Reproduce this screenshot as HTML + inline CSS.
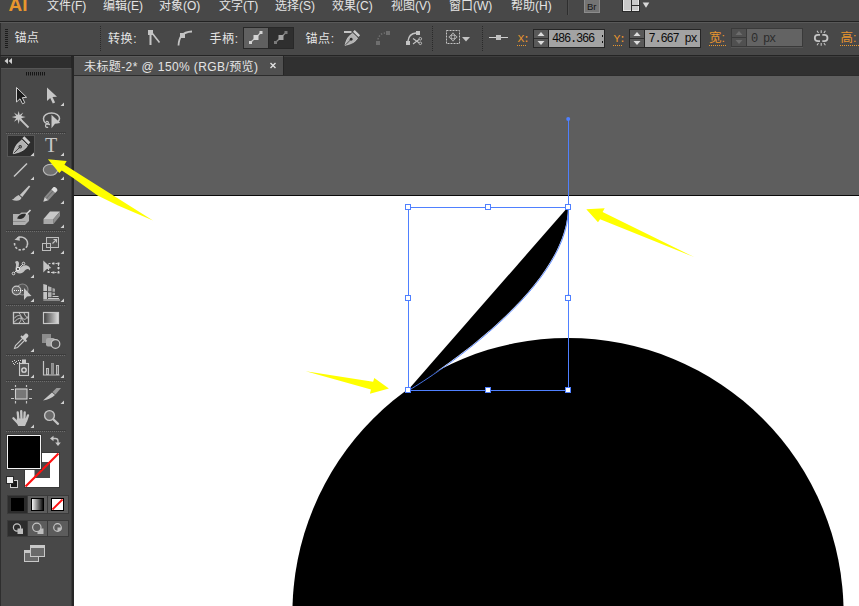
<!DOCTYPE html>
<html lang="zh"><head><meta charset="utf-8"><title>Adobe Illustrator</title>
<style>
html,body{margin:0;padding:0;background:#5e5e5e;overflow:hidden}
body{width:859px;height:606px;position:relative}
svg{position:absolute;left:0;top:0;display:block}
text{font-family:"Liberation Sans","Noto Sans CJK SC",sans-serif;font-size:12px;fill:#e4e4e4}
.mono{font-family:"Liberation Mono","Noto Sans CJK SC",monospace;font-size:12px;letter-spacing:-1.200px;fill:#0c0c0c}
.or{fill:#e8962e}
.ic{fill:#c4c4c4}
.st{fill:none;stroke:#c4c4c4}
</style></head><body>
<svg width="859" height="606" viewBox="0 0 859 606">
<defs>
<linearGradient id="gLR" x1="0" x2="1" y1="0" y2="0"><stop offset="0" stop-color="#3c3c3c"/><stop offset="1" stop-color="#e0e0e0"/></linearGradient>
<linearGradient id="gWB" x1="0" x2="1" y1="0" y2="0"><stop offset="0" stop-color="#fff"/><stop offset="1" stop-color="#000"/></linearGradient>
<clipPath id="cv"><rect x="74" y="76" width="785" height="530"/></clipPath>
</defs>
<!-- canvas -->
<rect x="0" y="0" width="859" height="606" fill="#5e5e5e"/>
<rect x="74" y="195" width="785" height="411" fill="#ffffff"/>
<rect x="74" y="195" width="785" height="1" fill="#0a0a0a"/>
<!-- ARTWORK -->
<g id="art" clip-path="url(#cv)">
<circle cx="568" cy="613.600" r="275.600" fill="#000"/>
<path d="M408 390 L568 207 C568 296 408 390 408 390 Z" fill="#000"/>
</g>
<!-- SELECTION -->
<g id="sel" shape-rendering="crispEdges">
<g fill="none" stroke="#4f80ff" stroke-width="1">
<rect x="408.5" y="207.5" width="160" height="183"/>
<line x1="568.5" y1="118" x2="568.5" y2="207"/>
</g>
<g shape-rendering="auto" fill="none" stroke="#4f80ff" stroke-width="1">
<path d="M568.5 207.5 C568.5 296.5 408.5 390.5 408.5 390.5" stroke-width="0.9"/>
</g>
<circle cx="568.200" cy="119" r="2" fill="#4f80ff" shape-rendering="auto"/>
<circle cx="568.5" cy="296.500" r="2" fill="#4f80ff" shape-rendering="auto"/>
<g fill="#fff" stroke="#4f80ff" stroke-width="1">
<rect x="405.500" y="204.5" width="5" height="5"/>
<rect x="485.500" y="204.5" width="5" height="5"/>
<rect x="565.500" y="204.5" width="5" height="5"/>
<rect x="405.500" y="295.5" width="5" height="5"/>
<rect x="565.500" y="295.5" width="5" height="5"/>
<rect x="405.500" y="387.5" width="5" height="5"/>
<rect x="485.500" y="387.5" width="5" height="5"/>
<rect x="565.500" y="387.5" width="5" height="5"/>
</g>
</g>
<!-- CHROME -->
<g id="chrome">
<!-- menu bar + control bar -->
<rect x="0" y="0" width="859" height="56" fill="#484848"/>
<rect x="0" y="21" width="859" height="1" fill="#222"/>
<rect x="0" y="22" width="859" height="1" fill="#595959"/>
<rect x="0" y="55" width="859" height="1" fill="#242424"/>
<rect x="0" y="23" width="1" height="32" fill="#2e2e2e"/>
<!-- tab bar -->
<rect x="0" y="56" width="859" height="20" fill="#303030"/>
<rect x="284" y="56" width="575" height="1" fill="#3e3e3e"/>
<rect x="283" y="56" width="1" height="19" fill="#262626"/>
<rect x="74" y="56" width="209" height="19" fill="#505050"/>
<rect x="74" y="56" width="209" height="1" fill="#5c5c5c"/>
<rect x="74" y="75" width="785" height="1" fill="#2c2c2c"/>
<!-- tool panel -->
<rect x="0" y="56" width="71" height="550" fill="#484848"/>
<rect x="0" y="56" width="71" height="12" fill="#2e2e2e"/>
<rect x="0" y="56" width="71" height="1" fill="#444"/>
<rect x="0" y="68" width="71" height="1" fill="#555"/>
<rect x="0" y="56" width="1" height="550" fill="#2e2e2e"/>
<rect x="71" y="56" width="3" height="550" fill="#262626"/>
<rect x="71" y="68" width="1" height="538" fill="#383838"/>
<g id="menutext">
<text x="8.500" y="10.500" class="or" style="font-size:19px;font-weight:bold">AI</text>
<text x="47" y="9.500">文件(F)</text>
<text x="103" y="9.500">编辑(E)</text>
<text x="159" y="9.500">对象(O)</text>
<text x="219" y="9.500">文字(T)</text>
<text x="275" y="9.500">选择(S)</text>
<text x="332" y="9.500">效果(C)</text>
<text x="391" y="9.500">视图(V)</text>
<text x="449" y="9.500">窗口(W)</text>
<text x="511" y="9.500">帮助(H)</text>
</g>
<g id="ctltext">
<text x="14.500" y="42" style="letter-spacing:0.300px">锚点</text>
<text x="108" y="43" style="letter-spacing:0.600px">转换:</text>
<text x="209.500" y="43" style="letter-spacing:0.600px">手柄:</text>
<text x="305.500" y="43" style="letter-spacing:0.600px">锚点:</text>
<text x="84" y="71" textLength="174" lengthAdjust="spacing">未标题-2* @ 150% (RGB/预览)</text>
<path d="M270.500 63 l5 5 m0 -5 l-5 5" stroke="#e0e0e0" stroke-width="1.400" fill="none"/>
</g>
<g id="menuicons">
<rect x="567" y="0" width="1" height="15" fill="#2e2e2e"/>
<rect x="568" y="0" width="1" height="15" fill="#505050"/>
<rect x="584.500" y="-0.500" width="15" height="13" fill="#747474" stroke="#8c8c8c"/>
<text x="587" y="9.500" style="font-size:9.500px;fill:#161616">Br</text>
<rect x="622.500" y="-0.500" width="17" height="12" fill="#c8c8c8" stroke="#2a2a2a"/>
<rect x="623.500" y="-0.500" width="15" height="11" fill="none" stroke="#e6e6e6"/>
<path d="M631.500 0 v11 M631.500 5.500 h8" stroke="#2a2a2a" fill="none"/>
<path d="M642.700 2.500h6.600l-3.300 5.200z" fill="#d8d8d8"/>
</g>
<g id="ctlicons">
<!-- grip -->
<path d="M5 29.500h3M5 31.500h3M5 33.500h3M5 35.500h3M5 37.500h3M5 39.500h3M5 41.500h3M5 43.500h3M5 45.500h3M5 47.500h3" stroke="#1c1c1c" fill="none"/>
<!-- dotted separators -->
<g stroke="#2a2a2a" stroke-dasharray="1 1" fill="none">
<path d="M100.500 26v25M432.500 26v25M482.500 26v25"/>
</g>
<!-- convert icons -->
<g>
<rect x="148" y="30" width="5" height="5" class="ic"/>
<path d="M150.500 35v10" stroke="#c4c4c4" stroke-width="2" fill="none"/>
<path d="M152 33l7.500 9.500" stroke="#c4c4c4" stroke-width="1.600" fill="none"/>
<rect x="180" y="33" width="5" height="5" class="ic"/>
<path d="M178.500 45.500c0.500 -8 3 -13.500 13.500 -14" stroke="#c4c4c4" stroke-width="1.800" fill="none"/>
</g>
<!-- handle buttons -->
<rect x="243.500" y="27.500" width="50" height="21" fill="#2f2f2f" stroke="#282828"/>
<rect x="244" y="28" width="24" height="20" fill="#606060"/>
<rect x="268" y="28" width="1" height="20" fill="#282828"/>
<g>
<path d="M250.500 42.500l10.500 -10" stroke="#c8c8c8" stroke-width="1.200" fill="none"/>
<rect x="253.500" y="35" width="5" height="5" fill="#d4d4d4"/>
<rect x="249" y="41" width="3" height="3" fill="#d4d4d4"/><rect x="259.500" y="31" width="3" height="3" fill="#d4d4d4"/>
<path d="M275.500 42.500l10.500 -10" stroke="#8a8a8a" stroke-width="1.200" fill="none"/>
<rect x="278.500" y="35" width="5" height="5" fill="#a4a4a4"/>
<rect x="274" y="41" width="3" height="3" fill="#7a7a7a"/><rect x="284.500" y="31" width="3" height="3" fill="#7a7a7a"/>
</g>
<!-- pen minus -->
<g>
<path d="M344 32h7.500" stroke="#d4d4d4" stroke-width="1.800" fill="none"/>
<g transform="translate(345,45.300) scale(0.880) translate(-13.200,-153.700)">
<path d="M22.300 138.300l2 -2 6 6 -1.800 2.100z" fill="#cdcdcd"/>
<path d="M13.200 153.700c1.300 -5.500 2.800 -9.200 6.300 -11.700l2.300 -2 5.700 5.500 -1.700 2.500c-2.800 3 -6.800 4.500 -12.600 5.700z" fill="#b2b2b2" stroke="#d8d8d8" stroke-width="0.800"/>
<path d="M13.800 153.200l6 -6" stroke="#353535" stroke-width="0.900" fill="none"/>
<circle cx="20.200" cy="146.800" r="1.600" fill="#303030"/>
</g>
</g>
<!-- dim curve -->
<g fill="#6e6e6e">
<rect x="376" y="41" width="4" height="4"/><rect x="386" y="31" width="4" height="4"/>
<path d="M378 39.500c0.500 -3.500 3 -6 7 -6.500" stroke="#6e6e6e" stroke-width="1.500" stroke-dasharray="1.500 1.500" fill="none"/>
</g>
<!-- cut path -->
<g>
<rect x="406" y="41" width="4" height="4" class="ic"/><rect x="416" y="31" width="4" height="4" class="ic"/>
<path d="M408 41c0.500 -4.500 3.500 -7.500 8 -8" class="st" stroke-width="1.400"/>
<path d="M413 38.500l6 4.200M413 44l6 -4.500" class="st" stroke-width="1.100"/>
<circle cx="420.300" cy="38.800" r="1.300" class="st" stroke-width="0.900"/><circle cx="420.300" cy="43.300" r="1.300" class="st" stroke-width="0.900"/>
</g>
<!-- isolate -->
<g>
<rect x="446.500" y="30.500" width="13" height="13" class="st" stroke-dasharray="2 1"/>
<path d="M453 32.800l2 2.400h-4zM453 41.200l2 -2.400h-4zM448.800 37l2.400 -2v4zM457.200 37l-2.400 -2v4z" class="st" stroke-width="0.800"/>
<path d="M462 37h8l-4 4.500z" class="ic"/>
</g>
<!-- align -->
<path d="M489 37.500h19" stroke="#d0d0d0" fill="none"/>
<rect x="496" y="35" width="5" height="5" fill="#c0c0c0"/>
</g>
<g id="fields">
<text x="517.500" y="42" class="mono or" style="font-size:11.500px;letter-spacing:-1.500px">X:</text>
<path d="M517 45.500h10" stroke="#e8962e" stroke-dasharray="1 1" fill="none"/>
<!-- spinner X -->
<rect x="533.500" y="29.500" width="15" height="18" fill="#595959" stroke="#262626"/>
<path d="M534 38.500h14" stroke="#2e2e2e" fill="none"/>
<path d="M537.500 36h7l-3.500 -4zM537.500 41h7l-3.500 4z" fill="#dcdcdc"/>
<rect x="549" y="29" width="56" height="19" fill="#a3a3a3"/>
<rect x="548.500" y="29.500" width="56" height="18" fill="none" stroke="#262626"/>
<text x="552" y="42" class="mono">486.366</text>
<rect x="602" y="35" width="1" height="2" fill="#111"/><rect x="602" y="41" width="1" height="2" fill="#111"/>
<text x="613.500" y="42" class="mono or" style="font-size:11.500px;letter-spacing:-1.500px">Y:</text>
<path d="M613 45.500h10" stroke="#e8962e" stroke-dasharray="1 1" fill="none"/>
<rect x="629.500" y="29.500" width="15" height="18" fill="#595959" stroke="#262626"/>
<path d="M630 38.500h14" stroke="#2e2e2e" fill="none"/>
<path d="M633.500 36h7l-3.500 -4zM633.500 41h7l-3.500 4z" fill="#dcdcdc"/>
<rect x="645" y="29" width="56" height="19" fill="#a3a3a3"/>
<rect x="644.500" y="29.500" width="56" height="18" fill="none" stroke="#262626"/>
<text x="648.500" y="42" class="mono">7.667 px</text>
<text x="709" y="42.200" class="or" style="font-size:12.500px">宽:</text>
<path d="M709 45.500h17" stroke="#e8962e" stroke-dasharray="1 1" fill="none"/>
<rect x="731" y="47" width="72" height="1" fill="#565656"/>
<rect x="731.500" y="28.500" width="15" height="18" fill="#505050" stroke="#3a3a3a"/>
<path d="M732 37.500h14" stroke="#3a3a3a" fill="none"/>
<path d="M735.500 35h7l-3.500 -4zM735.500 40h7l-3.500 4z" fill="#6c6c6c"/>
<rect x="747" y="28" width="56" height="19" fill="#636363"/>
<rect x="746.500" y="28.500" width="56" height="18" fill="none" stroke="#3a3a3a"/>
<text x="751" y="41.500" class="mono" style="fill:#2c2c2c">0 px</text>
<!-- link -->
<g class="st" stroke-width="1.800">
<path d="M820 34.800h-2a3.200 3.200 0 0 0 0 6.400h2M822.300 34.800h2a3.200 3.200 0 0 1 0 6.400h-2"/>
</g>
<path d="M821.200 30.300v2.700M817 30.800l1.500 2.200M825.400 30.800l-1.500 2.200M821.200 43v2.700M817 45.200l1.500 -2.200M825.400 45.200l-1.500 -2.200" class="st" stroke-width="1.100"/>
<text x="840.500" y="42.200" class="or" style="font-size:12.500px">高:</text>
<path d="M840 45.500h19" stroke="#e8962e" stroke-dasharray="1 1" fill="none"/>
</g>
<g id="tools">
<!-- header -->
<path d="M8 58l-3.500 3 3.500 3zM12 58l-3.500 3 3.500 3z" fill="#cfcfcf"/>
<path d="M26.500 72v3.500M28.500 72v3.500M30.500 72v3.500M32.500 72v3.500M34.500 72v3.500M36.500 72v3.500M38.500 72v3.500M40.500 72v3.500M42.500 72v3.500M44.500 72v3.500" stroke="#161616" fill="none"/>
<!-- separators -->
<g stroke="#3c3c3c" fill="none"><path d="M6 132.500h60M6 230.500h60M6 304.500h60M6 354.500h60M6 380.500h60M6 430.500h60"/></g>
<g stroke="#6c6c6c" fill="none" stroke-dasharray="1 1"><path d="M6 133.500h60M6 231.500h60M6 305.500h60M6 355.500h60M6 381.500h60M6 431.500h60"/></g>
<!-- 1 selection -->
<path d="M16.500 87.500v14.500l3.500 -3.200 2.500 5 2.300 -1.100 -2.500 -5 4.300 -0.400z" fill="#1c1c1c" stroke="#d0d0d0" stroke-width="1" stroke-linejoin="miter"/>
<!-- 2 direct selection -->
<path d="M47 87.500v13.500l3.200 -3 2.600 5.600 2.300 -1.100 -2.600 -5.500 4.500 -0.300z" fill="#c6c6c6"/>
<path d="M64 106h-3.500l3.500 -3.500z" fill="#d0d0d0"/>
<!-- 3 magic wand -->
<path transform="translate(0.700,0.500)" d="M18 110.500l1 4 3.500 -2.500 -2 3.500 4.500 1 -4.500 1.200 2 3.500 -3.500 -2.200 -1 4.500 -1.200 -4.500 -3.500 2.200 2.200 -3.500 -4.500 -1.200 4.500 -1 -2.200 -3.500 3.500 2.500z" fill="#c8c8c8"/>
<path d="M20.500 119.500l8 8" stroke="#c4c4c4" stroke-width="1.800" fill="none"/>
<!-- 4 lasso -->
<path d="M50 124.500c-4 -0.500 -6.500 -3 -6.500 -6 0 -3.300 3.500 -5.500 8 -5.500s8 2.300 8 5.300c0 2 -1 3.500 -3 4.500" class="st" stroke-width="1.500"/>
<path d="M46 121.500c2 -0.500 3 1 2 2s-3 0.500 -2.500 2.500 2 1.500 2.500 1" class="st" stroke-width="1.200"/>
<path d="M51.500 114.800v13.500l3.500 -4.500 5.300 -0.800z" fill="#c8c8c8"/>
<!-- 5 pen (selected) -->
<rect x="7.500" y="135.500" width="27" height="21" fill="#2e2e2e" stroke="#565656"/>
<g>
<path d="M22.300 138.300l2 -2 6 6 -1.800 2.100z" fill="#cdcdcd"/>
<path d="M13.200 153.700c1.300 -5.500 2.800 -9.200 6.300 -11.700l2.300 -2 5.700 5.500 -1.700 2.500c-2.800 3 -6.800 4.500 -12.600 5.700z" fill="#b2b2b2" stroke="#d8d8d8" stroke-width="0.800"/>
<path d="M13.800 153.200l6 -6" stroke="#353535" stroke-width="0.900" fill="none"/>
<circle cx="20.200" cy="146.800" r="1.700" fill="#303030"/>
<circle cx="20.200" cy="146.800" r="0.600" fill="#d0d0d0"/>
</g>
<path d="M34 156h-3.500l3.500 -3.500z" fill="#d0d0d0"/>
<!-- 6 type -->
<text x="45" y="152.200" style="font-family:'Liberation Serif',serif;font-size:20px;fill:#c8c8c8">T</text>
<path d="M64 156h-3.500l3.500 -3.500z" fill="#d0d0d0"/>
<!-- 7 line -->
<path d="M14 176.500l13 -13" stroke="#c8c8c8" stroke-width="1.400" fill="none"/>
<path d="M34 180h-3.500l3.500 -3.500z" fill="#d0d0d0"/>
<!-- 8 ellipse -->
<ellipse cx="50.500" cy="169.800" rx="7.200" ry="5.500" fill="#707070" stroke="#bcbcbc" stroke-width="1.100"/>
<path d="M64 180h-3.500l3.500 -3.500z" fill="#d0d0d0"/>
<!-- 9 brush -->
<path d="M29 185.500l1.300 1 -8 10.500 -2.500 -2z" fill="#c4c4c4"/>
<path d="M11.800 199.800c2.500 -0.800 3.500 -3.500 6.800 -4.800l3 2.800c-1 3.200 -5.300 3.700 -9.800 2z" fill="#c0c0c0"/>
<!-- 10 pencil -->
<path d="M43.300 201.700l1.500 -5 3.700 3.600z" fill="#cdcdcd"/>
<path d="M44.800 196.700l6.500 -7.200 3.800 3.600 -6.600 7.200z" fill="#8a8a8a"/>
<path d="M51.300 189.500l2 -2.200c1.500 -1.500 5.300 2 3.800 3.600l-2 2.200z" fill="#dedede"/>
<path d="M46.500 198.300l6.500 -7.200" stroke="#6a6a6a" stroke-width="1" fill="none"/>
<path d="M64 204h-3.500l3.500 -3.500z" fill="#d0d0d0"/>
<!-- 11 blob brush -->
<path d="M13 214h6.500l2 -1.500h5l2.500 2.500v6l-4 4h-12z" fill="#b0b0b0"/>
<path d="M13 221.500h12.500" stroke="#8e8e8e" fill="none"/>
<path d="M30.500 210l-5 5" stroke="#d4d4d4" stroke-width="1.600" fill="none"/>
<path d="M17 218.500c1.500 -3.500 5 -5.500 9 -4.500 -1 4 -5 6 -9 4.500z" fill="#2c2c2c"/>
<!-- 12 eraser -->
<path d="M43.500 219l6.500 -7.500h10l-6.500 7.500z" fill="#c8c8c8"/>
<path d="M43.500 219h10v5h-10z" fill="#a8a8a8"/>
<path d="M53.500 219l6.500 -7.500v4.500l-6.500 8z" fill="#8c8c8c"/>
<path d="M64 228h-3.500l3.500 -3.500z" fill="#d0d0d0"/>
<!-- 13 rotate -->
<path d="M27.100 245.700a6.500 6.500 0 0 1 -12.500 -3.300" class="st" stroke-width="1.600" stroke-dasharray="2.400 1.500"/>
<path d="M17.300 238.200a6.500 6.500 0 0 1 9.800 7.500" class="st" stroke-width="1.500"/>
<path d="M14.500 239.700l5 -4 0.300 5z" fill="#c4c4c4"/>
<path d="M34 254h-3.500l3.500 -3.500z" fill="#d0d0d0"/>
<!-- 14 scale -->
<rect x="46.500" y="237.500" width="12" height="10" fill="#525252" stroke="#bdbdbd"/>
<rect x="42.500" y="243.500" width="8" height="7" fill="none" stroke="#bdbdbd"/>
<path d="M52.500 243.500l4 -4M53.500 239.500h3v3" class="st" stroke-width="1.100"/>
<path d="M64 254h-3.500l3.500 -3.500z" fill="#d0d0d0"/>
<!-- 15 warp -->
<path d="M15 262c2 -2 4 -1 4 1.500s-1 4 -1 6c3 -3 6 -5 9 -4s3.500 3 3 5c-1 -1.500 -2.500 -2 -4 -1s-3 4 -6 4 -4.500 -1.500 -4.500 -4 1.500 -5 -0.500 -7.500z" fill="#c0c0c0"/>
<path d="M13.500 273.500l10 -10" stroke="#e6e6e6" stroke-width="0.900" fill="none"/>
<circle cx="18" cy="269" r="1.600" fill="#484848" stroke="#f0f0f0" stroke-width="0.900"/>
<circle cx="13.500" cy="273.500" r="1.300" fill="#484848" stroke="#f0f0f0" stroke-width="0.800"/>
<circle cx="23.500" cy="263.500" r="1.300" fill="#484848" stroke="#f0f0f0" stroke-width="0.800"/>
<path d="M34 278h-3.500l3.500 -3.500z" fill="#d0d0d0"/>
<!-- 16 free transform -->
<rect x="48.500" y="263.500" width="10" height="9" class="st" stroke-dasharray="2 1.500"/>
<g fill="#d4d4d4"><rect x="47.500" y="271" width="2" height="2"/><rect x="52.500" y="271.500" width="2" height="2"/><rect x="57.500" y="271.500" width="2" height="2"/><rect x="57.500" y="262.500" width="2" height="2"/><rect x="52.500" y="262.500" width="2" height="2"/><rect x="57.500" y="267" width="2" height="2"/></g>
<path d="M43.300 260.500v12l3.200 -3.200 4.800 -1.300z" fill="#c4c4c4"/>
<!-- 17 shape builder -->
<circle cx="22.500" cy="289.500" r="5.500" fill="#555" stroke="#8e8e8e" stroke-width="1.200"/>
<circle cx="16.500" cy="290.500" r="4.300" fill="#666" stroke="#c8c8c8" stroke-width="1.200"/>
<path d="M14 290.500h10" stroke="#f0f0f0" stroke-width="1.200" stroke-dasharray="1 1" fill="none"/>
<path d="M24 288v12l3 -3.500 4.500 -0.500z" fill="#c8c8c8"/>
<path d="M34 302h-3.500l3.500 -3.500z" fill="#d0d0d0"/>
<!-- 18 perspective grid -->
<path d="M43.300 284l3.700 1v6h-3.700zM43.300 292h3.700v7h-3.700z" fill="#c4c4c4"/>
<path d="M48 286.300l3.500 1v4h-3.500zM48 292.300h3.500v5h-3.500z" fill="#b4b4b4"/>
<path d="M52.500 288l2.500 0.700v3h-2.500zM52.500 292.700h2.500v2.300h-2.500z" fill="#a4a4a4"/>
<path d="M52.500 296.500h6M48 298.500h11M43.300 300h16.700" stroke="#c8c8c8" fill="none"/>
<path d="M64 302h-3.500l3.500 -3.500z" fill="#d0d0d0"/>
<!-- 19 mesh -->
<rect x="13.500" y="312.500" width="15" height="11" class="st" stroke-width="1.300"/>
<path d="M14 318.500c3 -3.500 6 -4 8 -1s4 2 6.500 -1.500M14 322.500c2 -3 5 -4.500 8 -4.500M19 313c3 3 3 7 0 10M24 313c1 3 3 5 4.500 5.500M22 318c0 2 2 4 3 5.500" class="st" stroke-width="1"/>
<!-- 20 gradient -->
<rect x="43.500" y="312.500" width="15" height="11" fill="url(#gLR)" stroke="#c8c8c8" stroke-width="1.200"/>
<!-- 21 eyedropper -->
<path d="M14.500 348.500l1 -3 8 -8 2 2 -8 8z" fill="none" stroke="#c8c8c8" stroke-width="1.100"/>
<path d="M22 337l3 -3c1.500 -1.500 4.500 1 3 3l-3 3z" fill="#c8c8c8"/>
<path d="M21 336l5.500 5.500" stroke="#c8c8c8" stroke-width="1.800" fill="none"/>
<path d="M34 352h-3.500l3.500 -3.500z" fill="#d0d0d0"/>
<!-- 22 blend -->
<rect x="42" y="334" width="9" height="9" fill="#8c8c8c"/>
<rect x="46" y="338" width="9" height="8.500" rx="2" fill="#a8a8a8"/>
<circle cx="55.500" cy="344" r="4.300" fill="#505050" stroke="#c8c8c8" stroke-width="1.200"/>
<!-- 23 symbol sprayer -->
<rect x="19.500" y="363.500" width="9" height="12" fill="#555" stroke="#c8c8c8" stroke-width="1.100"/>
<rect x="22" y="359.500" width="4" height="3.500" fill="#c8c8c8"/>
<circle cx="24" cy="370" r="2.200" fill="none" stroke="#dcdcdc" stroke-width="1.300"/>
<g fill="#cfcfcf"><rect x="12" y="361" width="1" height="1"/><rect x="14" y="360" width="1" height="1"/><rect x="16" y="361" width="1" height="1"/><rect x="18" y="360" width="1" height="1"/><rect x="13" y="363" width="1" height="1"/><rect x="15" y="362" width="1" height="1"/><rect x="17" y="363" width="1" height="1"/><rect x="14" y="364" width="1" height="1"/><rect x="19" y="362" width="1" height="1"/><rect x="20" y="360" width="1" height="1"/></g>
<path d="M34 378h-3.500l3.500 -3.500z" fill="#d0d0d0"/>
<!-- 24 graph -->
<path d="M43.500 361v14h16" class="st" stroke-width="1.200"/>
<rect x="46.500" y="368.500" width="2" height="6" fill="#777" stroke="#c8c8c8" stroke-width="0.900"/>
<rect x="51.500" y="363.500" width="2" height="11" fill="#8a8a8a" stroke="#9a9a9a" stroke-width="0.900"/>
<rect x="56.500" y="365.500" width="2" height="9" fill="#777" stroke="#c8c8c8" stroke-width="0.900"/>
<path d="M64 378h-3.500l3.500 -3.500z" fill="#d0d0d0"/>
<!-- 25 artboard -->
<rect x="15.500" y="389" width="11.500" height="10" fill="#777" stroke="#cfcfcf" stroke-width="1.100"/>
<path d="M11 389.500h3M29 389.500h3M11 398.500h3M29 398.500h3M15.500 385v2M26.500 385v2M15.500 401v2.500M26.500 401v2.500" class="st" stroke-width="1.200"/>
<!-- 26 slice -->
<path d="M43 400.500l9 -8 3 2.500c-3 3 -7 4.500 -12 5.500z" fill="#c8c8c8"/>
<path d="M52.500 392l4 -4h4.500l-5.500 6.500z" fill="#9a9a9a"/>
<path d="M64 404h-3.500l3.500 -3.500z" fill="#d0d0d0"/>
<!-- 27 hand -->
<g stroke="#c4c4c4" stroke-width="2.300" stroke-linecap="round" fill="none"><path d="M17.700 412.300l0.800 8M21.200 411.100l0.300 9M24.700 412.400l-0.400 8M28 415.400l-2 5.600M13.400 418.300l4.300 4.400"/></g>
<path d="M16.800 418.500h10.500l-1 4.500 -1.300 3h-6.800l-1.600 -3.500z" fill="#c4c4c4"/>
<path d="M34 428h-3.500l3.500 -3.500z" fill="#d0d0d0"/>
<!-- 28 zoom -->
<circle cx="49.500" cy="415.500" r="4.900" fill="#6a6a6a" stroke="#c4c4c4" stroke-width="1.400"/>
<path d="M53.500 419.500l4.500 4.300" stroke="#c4c4c4" stroke-width="2.300" stroke-linecap="round" fill="none"/>
</g>
<g id="swatches">
<!-- stroke swatch -->
<rect x="25" y="453" width="34" height="34" fill="#fff"/>
<rect x="34.500" y="462" width="15.500" height="16" fill="#484848"/>
<path d="M25.500 486.500l33 -33" stroke="#ff1010" stroke-width="2.200" fill="none"/>
<rect x="24.500" y="452.500" width="35" height="35" fill="none" stroke="#3a3a3a"/>
<!-- fill swatch -->
<rect x="6.500" y="434.500" width="35" height="35" fill="#000" stroke="#3a3a3a"/>
<rect x="7.500" y="435.500" width="33" height="33" fill="#000" stroke="#f4f4f4"/>
<!-- swap -->
<path d="M53 438.500h2.500c1.500 0 2.500 1 2.500 2.500v2" class="st" stroke-width="1.300"/><path d="M50 438.500l3.500 -2.800v5.600zM58 446l-2.800 -3.500h5.600z" fill="#c8c8c8"/>
<!-- default -->
<rect x="10.500" y="480.500" width="7" height="7" fill="#1a1a1a" stroke="#d0d0d0"/>
<rect x="6.500" y="476.500" width="7" height="7" fill="#f0f0f0" stroke="#2a2a2a"/>
<!-- colour mode buttons -->
<rect x="7" y="495" width="62" height="19" fill="#3a3a3a"/>
<rect x="8" y="496" width="19" height="17" fill="#2c2c2c"/>
<rect x="28" y="496" width="19" height="17" fill="#5c5c5c"/>
<rect x="48" y="496" width="20" height="17" fill="#5c5c5c"/>
<rect x="11" y="498" width="13" height="13" fill="#000"/>
<rect x="31.500" y="498.500" width="12" height="12" fill="url(#gWB)" stroke="#000"/>
<rect x="51.500" y="498.500" width="12" height="12" fill="#fff" stroke="#000"/>
<path d="M52.500 509.500l10 -10" stroke="#ff1010" stroke-width="1.800" fill="none"/>
<!-- draw mode buttons -->
<rect x="7" y="520" width="62" height="17" fill="#3a3a3a"/>
<rect x="8" y="521" width="19" height="15" fill="#2c2c2c"/>
<rect x="28" y="521" width="19" height="15" fill="#5c5c5c"/>
<rect x="48" y="521" width="20" height="15" fill="#5c5c5c"/>
<circle cx="17" cy="527.500" r="3.600" fill="none" stroke="#c4c4c4" stroke-width="1.200"/>
<rect x="17.500" y="528.500" width="5.500" height="5.500" fill="#bdbdbd"/>
<rect x="37.500" y="528.500" width="6" height="5.500" fill="#bdbdbd"/>
<circle cx="36.800" cy="527.300" r="4.200" fill="#5c5c5c" stroke="#c4c4c4" stroke-width="1.200"/>
<circle cx="57.500" cy="527.500" r="3.800" fill="none" stroke="#c4c4c4" stroke-width="1.200"/>
<path d="M57.500 527.500h4v1.500c0 1.500 -1.500 2.500 -4 2.500z" fill="#bdbdbd"/>
<!-- screen mode -->
<rect x="24.500" y="550.500" width="14" height="11" fill="#6a6a6a" stroke="#c8c8c8"/>
<rect x="25" y="551" width="13" height="2" fill="#c8c8c8"/>
<rect x="30.500" y="545.500" width="14" height="11" fill="#6a6a6a" stroke="#c8c8c8"/>
<rect x="31" y="546" width="13" height="2" fill="#c8c8c8"/>
</g>
</g>
<!-- ARROWS -->
<g id="arrows" fill="#ffff00">
<polygon points="47.900,159.3 66.700,161.1 64.500,164.7 153,220.6 118,205.6 97.600,195.5 73.200,177.900 61.800,170.4 59.300,173.1"/>
<polygon points="586.300,209.2 604.700,208.3 602.600,212 694.200,257.1 600.100,219.3 598,222.300"/>
<polygon points="388.900,388.600 374.300,378 373.100,381.800 305.800,371.200 371,389.600 369.900,393.700"/>
</g>
</svg>
</body></html>
